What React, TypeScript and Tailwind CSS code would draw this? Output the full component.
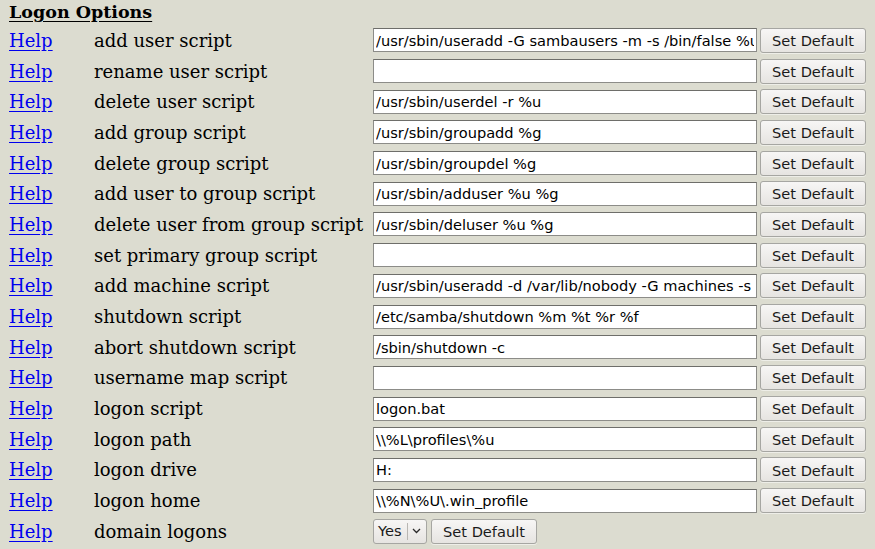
import React from 'react';

const rows: { label: string; value?: string; select?: boolean }[] = [
  { label: 'add user script', value: '/usr/sbin/useradd -G sambausers -m -s /bin/false %u' },
  { label: 'rename user script', value: '' },
  { label: 'delete user script', value: '/usr/sbin/userdel -r %u' },
  { label: 'add group script', value: '/usr/sbin/groupadd %g' },
  { label: 'delete group script', value: '/usr/sbin/groupdel %g' },
  { label: 'add user to group script', value: '/usr/sbin/adduser %u %g' },
  { label: 'delete user from group script', value: '/usr/sbin/deluser %u %g' },
  { label: 'set primary group script', value: '' },
  { label: 'add machine script', value: '/usr/sbin/useradd -d /var/lib/nobody -G machines -s /bin/false %u' },
  { label: 'shutdown script', value: '/etc/samba/shutdown %m %t %r %f' },
  { label: 'abort shutdown script', value: '/sbin/shutdown -c' },
  { label: 'username map script', value: '' },
  { label: 'logon script', value: 'logon.bat' },
  { label: 'logon path', value: '\\\\%L\\profiles\\%u' },
  { label: 'logon drive', value: 'H:' },
  { label: 'logon home', value: '\\\\%N\\%U\\.win_profile' },
  { label: 'domain logons', select: true },
];

function SetDefault() {
  return (
    <button className="h-[25px] w-[106px] rounded-[3px] border border-[#a6a6a2] bg-gradient-to-b from-[#f7f6f5] to-[#e6e4e1] pt-[1px] text-[14.6px] text-[#1a1a1a] [font-family:'DejaVu_Sans',sans-serif] shadow-[0_1px_0_#ffffff80]">
      Set Default
    </button>
  );
}

export default function App() {
  return (
    <div className="min-h-[549px] w-full bg-[#dcdcd0] pl-[9px] [font-family:'DejaVu_Serif',serif]">
      <div className="flex h-[25px] items-start pt-[1px]">
        <h2 className="text-[17.5px] font-bold leading-[22px] text-black underline underline-offset-[3px]">Logon Options</h2>
      </div>
      {rows.map((r) => (
        <div key={r.label} className="flex h-[30.69px] items-center">
          <a href="#" className="w-[85px] text-[18px] text-[#0000ee] underline underline-offset-[3px]">
            Help
          </a>
          <span className="w-[279px] whitespace-nowrap text-[18px] text-black">{r.label}</span>
          {r.select ? (
            <div className="flex items-center gap-[4px]">
              <div className="flex h-[25px] w-[54px] items-center rounded-[3px] border border-[#a6a6a2] bg-gradient-to-b from-[#f7f6f5] to-[#e6e4e1] [font-family:'DejaVu_Sans',sans-serif] text-[14.6px] text-[#1a1a1a]">
                <span className="w-[33px] pl-[4px]">Yes</span>
                <span className="h-[17px] w-px bg-[#b8b6b2]" />
                <svg width="19" height="10" viewBox="0 0 19 10" className="ml-[-1px]">
                  <path d="M6 3 L9.5 6.5 L13 3" fill="none" stroke="#2a2a2a" strokeWidth="1.3" />
                </svg>
              </div>
              <SetDefault />
            </div>
          ) : (
            <div className="flex items-center gap-[3px]">
              <input
                readOnly
                value={r.value}
                className="h-[24px] w-[384px] border border-[#8c8c88] border-t-[#6e6e6a] bg-white px-[2px] text-[14.6px] text-black outline-none [font-family:'DejaVu_Sans',sans-serif]"
              />
              <SetDefault />
            </div>
          )}
        </div>
      ))}
    </div>
  );
}
